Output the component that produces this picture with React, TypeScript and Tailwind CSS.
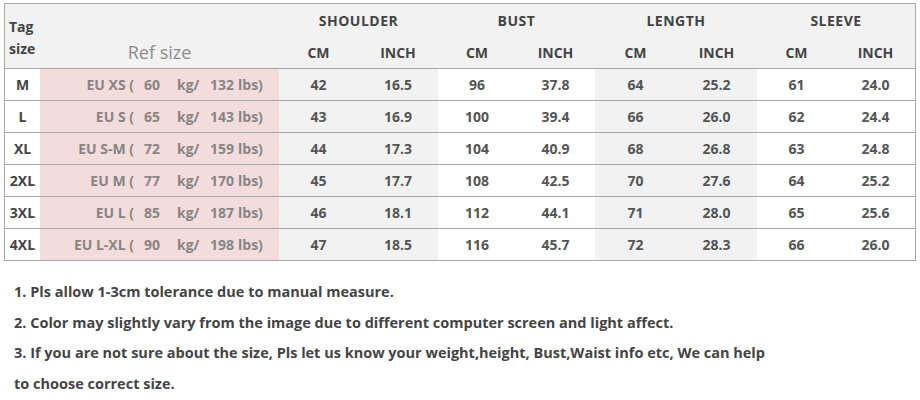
const rows = [
  { tag: 'M', eu: 'EU XS (', kg: '60', lbs: '132', v: ['42', '16.5', '96', '37.8', '64', '25.2', '61', '24.0'] },
  { tag: 'L', eu: 'EU S (', kg: '65', lbs: '143', v: ['43', '16.9', '100', '39.4', '66', '26.0', '62', '24.4'] },
  { tag: 'XL', eu: 'EU S-M (', kg: '72', lbs: '159', v: ['44', '17.3', '104', '40.9', '68', '26.8', '63', '24.8'] },
  { tag: '2XL', eu: 'EU M (', kg: '77', lbs: '170', v: ['45', '17.7', '108', '42.5', '70', '27.6', '64', '25.2'] },
  { tag: '3XL', eu: 'EU L (', kg: '85', lbs: '187', v: ['46', '18.1', '112', '44.1', '71', '28.0', '65', '25.6'] },
  { tag: '4XL', eu: 'EU L-XL (', kg: '90', lbs: '198', v: ['47', '18.5', '116', '45.7', '72', '28.3', '66', '26.0'] },
];

const groups = [
  { name: 'SHOULDER', w: 'w-[159px]', cols: ['w-[79px]', 'w-[80px]'] },
  { name: 'BUST', w: 'w-[157px]', cols: ['w-[78px]', 'w-[79px]'] },
  { name: 'LENGTH', w: 'w-[162px]', cols: ['w-[81px]', 'w-[81px]'] },
  { name: 'SLEEVE', w: 'w-[158px]', cols: ['w-[79px]', 'w-[79px]'] },
];

const bodyBg = ['bg-[#f2f2f2]', 'bg-white', 'bg-[#f2f2f2]', 'bg-white'];

const notes = [
  '1. Pls allow 1-3cm tolerance due to manual measure.',
  '2. Color may slightly vary from the image due to different computer screen and light affect.',
  '3. If you are not sure about the size, Pls let us know your weight,height, Bust,Waist info etc, We can help',
  'to choose correct size.',
];

export default function App() {
  return (
    <div className="w-[920px] h-[400px] bg-white pt-[3px] pl-[4px] font-['Open_Sans',sans-serif] font-bold text-[14px]">
      <div className="w-[912px] border border-[#a6a6a6]">
        {/* header */}
        <div className="flex h-[64px] bg-[#f2f2f2] text-[#444]">
          <div className="w-[35px] pl-[4px] pt-[12px] leading-[22px]">
            <div>Tag</div>
            <div>size</div>
          </div>
          <div className="w-[239px] flex items-end justify-center pb-[4px]">
            <span className="font-normal text-[18px] text-[#8c8c8c] leading-[24px]">Ref size</span>
          </div>
          {groups.map((g) => (
            <div key={g.name} className={`${g.w} flex flex-col`}>
              <div className="h-[32px] flex items-center justify-center tracking-[0.5px]">{g.name}</div>
              <div className="h-[32px] flex">
                <div className={`${g.cols[0]} flex items-center justify-center`}>CM</div>
                <div className={`${g.cols[1]} flex items-center justify-center`}>INCH</div>
              </div>
            </div>
          ))}
        </div>
        {/* body */}
        {rows.map((r) => (
          <div key={r.tag} className="flex h-[32px] border-t border-[#a6a6a6]">
            <div className="w-[35px] bg-white flex items-center justify-center text-[#444]">{r.tag}</div>
            <div className="w-[239px] bg-[#f2dcdc] flex items-center text-[#8a8484]">
              <span className="w-[94px] text-right whitespace-pre">{r.eu}</span>
              <span className="w-[33px] pl-[10px] box-content">{r.kg}</span>
              <span className="w-[33px]">kg/</span>
              <span className="w-[24px]">{r.lbs}</span>
              <span className="pl-[4px]">lbs)</span>
            </div>
            {groups.map((g, gi) => (
              <div key={g.name} className={`${g.w} ${bodyBg[gi]} flex text-[#555]`}>
                <div className={`${g.cols[0]} flex items-center justify-center`}>{r.v[gi * 2]}</div>
                <div className={`${g.cols[1]} flex items-center justify-center`}>{r.v[gi * 2 + 1]}</div>
              </div>
            ))}
          </div>
        ))}
      </div>
      <div className="pl-[10px] pt-[16px] text-[#444] text-[14.5px] leading-[30.5px]">
        {notes.map((n) => (
          <div key={n}>{n}</div>
        ))}
      </div>
    </div>
  );
}
